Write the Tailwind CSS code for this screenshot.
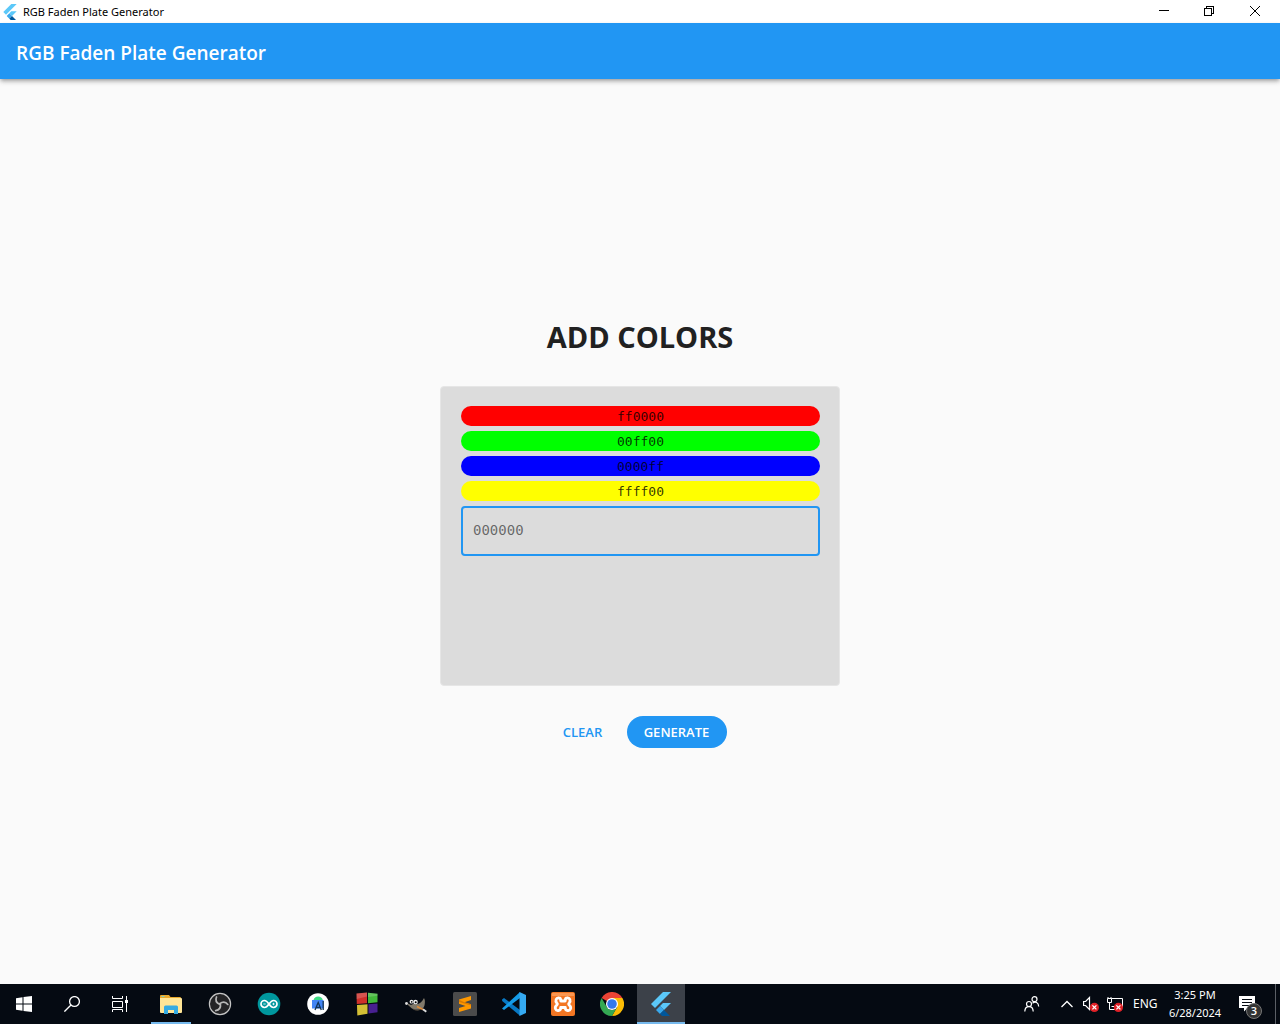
<!DOCTYPE html>
<html lang="en">
<head>
<meta charset="utf-8">
<meta name="viewport" content="width=device-width, initial-scale=1">
<title>RGB Faden Plate Generator</title>
<script src="https://cdn.jsdelivr.net/npm/@tailwindcss/browser@4"></script>
</head>
<body class="flex min-h-screen flex-col bg-[#fafafa] font-['Open_Sans','Noto_Sans',sans-serif] text-[#212121]">

<svg class="hidden" aria-hidden="true">
  <symbol id="flutter" viewBox="0 0 24 24">
    <path fill="#5bc8f9" d="M14 0h8L6 16l-4-4z"/>
    <path fill="#5bc8f9" d="M14 11h8l-7 7-4-4z"/>
    <path fill="#38a9ee" d="M7 18l4-4 4 4-4 4z"/>
    <path fill="#01579b" d="M11 22l4-4 6 6h-8z"/>
  </symbol>
</svg>

<div class="flex h-[23px] shrink-0 items-center bg-white pl-[2px] text-black">
  <svg class="size-4" aria-hidden="true"><use href="#flutter"/></svg>
  <span class="ml-[5px] flex-1 text-[11px] leading-4 font-['Noto_Sans',sans-serif]">RGB Faden Plate Generator</span>
  <button class="flex h-5 w-[46px] items-center justify-center" aria-label="Minimize">
    <svg class="size-[11px]" viewBox="0 0 11 11" shape-rendering="crispEdges"><path fill="currentColor" d="M1 4h10v1H1z"/></svg>
  </button>
  <button class="flex h-5 w-[46px] items-center justify-center" aria-label="Restore">
    <svg class="size-[11px]" viewBox="0 0 11 11" fill="none" stroke="currentColor" shape-rendering="crispEdges"><path d="M.5 2.500h7v7h-7zM2.500 2V.5h7v7H8"/></svg>
  </button>
  <button class="mr-[2px] flex h-5 w-[46px] items-center justify-center" aria-label="Close">
    <svg class="size-[11px]" viewBox="0 0 11 11" fill="none" stroke="currentColor"><path d="M0 0l10 10M10 0L0 10"/></svg>
  </button>
</div>

<header class="z-10 flex h-14 shrink-0 items-center bg-[#2196f3] px-4 pt-1 shadow-[0_2px_4px_-1px_rgba(0,0,0,0.3),0_3px_5px_rgba(0,0,0,0.16)]">
  <h1 class="text-[19px] leading-6 font-semibold text-white">RGB Faden Plate Generator</h1>
</header>

<main class="flex flex-1 flex-col items-center justify-center">
  <h2 class="pt-[2px] text-[29px] leading-[38px] font-bold">ADD COLORS</h2>
  <form class="flex flex-col items-center">
    <div class="my-[30px] h-[300px] w-[400px] rounded border border-[#e6e6e6] bg-[#dcdcdc] py-[19px] pr-[19px] pl-5 font-['DejaVu_Sans_Mono','Liberation_Mono',monospace]">
      <ul class="text-center text-[13px] leading-[22px] text-black/80">
        <li class="mb-[5px] h-5 rounded-full bg-[#ff0000]">ff0000</li>
        <li class="mb-[5px] h-5 rounded-full bg-[#00ff00]">00ff00</li>
        <li class="mb-[5px] h-5 rounded-full bg-[#0000ff]">0000ff</li>
        <li class="mb-[5px] h-5 rounded-full bg-[#ffff00]">ffff00</li>
      </ul>
      <input type="text" aria-label="Hex color" placeholder="000000" class="block h-[50px] w-full rounded border-2 border-[#2196f3] bg-transparent px-[10px] pb-[2px] text-sm outline-none placeholder:text-black/55">
    </div>
    <div class="flex gap-[15px] text-[13px] leading-5 font-semibold">
      <button type="reset" class="h-8 w-[58px] text-center text-[#2196f3]">CLEAR</button>
      <button type="button" class="h-8 w-[100px] rounded-full bg-[#2196f3] text-center text-white">GENERATE</button>
    </div>
  </form>
</main>

<footer class="flex h-10 shrink-0 items-stretch bg-[#050a12] text-white">
  <nav class="flex" aria-label="Taskbar">
    <button class="flex w-12 items-center justify-center" aria-label="Start">
      <svg class="size-4" viewBox="0 0 16 16" fill="#fff"><path d="M0 2.300L6.500 1.300v6.200H0zM7.500 1.100L16 0v7.500H7.500zM0 8.500h6.500v6.200L0 13.700zM7.500 8.500H16V16l-8.500-1.100z"/></svg>
    </button>
    <button class="flex w-12 items-center justify-center" aria-label="Search">
      <svg class="size-4" viewBox="0 0 16 16" fill="none" stroke="#fff" stroke-width="1.300"><circle cx="10.500" cy="5.500" r="4.900"/><path d="M7 9L.4 15.600"/></svg>
    </button>
    <button class="mr-[3px] flex w-12 items-center justify-center" aria-label="Task view">
      <svg class="size-4" viewBox="0 0 16 16" fill="none" stroke="#fff"><path d="M.5 0v2.500h10V0M.5 5.500h10v6H.5zM.5 16v-2.500h10V16M14.500 0v16"/><path fill="#fff" stroke="none" d="M13 4h3v3h-3z"/></svg>
    </button>
    <div class="flex gap-px">
      <button class="flex w-12 items-center justify-center" aria-label="File Explorer">
        <span class="flex h-10 w-10 items-center justify-center border-y-2 border-t-transparent border-b-[#76b9ed]">
          <svg class="h-[19px] w-[22px]" viewBox="0 0 22 19"><path fill="#e9a92c" d="M0 1q0-1 1-1h8l1.500 2H20q1 0 1 1v4H0z"/><path fill="#7ed0c0" d="M1.500 1h3v1h-3z"/><path fill="#ffe596" d="M0 3h21q1 0 1 1v13q0 1-1 1H1q-1 0-1-1z"/><path fill="#35abe2" d="M4 19v-7q0-1.500 1.500-1.500h11q1.500 0 1.500 1.500v7h-4v-4H8v4z"/></svg>
        </span>
      </button>
      <button class="flex w-12 items-center justify-center" aria-label="OBS Studio">
        <svg class="size-6" viewBox="0 0 24 24"><circle cx="12" cy="12" r="10.600" fill="#242426" stroke="#c4c4c4" stroke-width="1.200"/><g fill="none" stroke="#b8b8b8" stroke-width="1.700" stroke-linecap="round"><path d="M12 12.500C8.500 11 7 8.500 8.500 5"/><path d="M12 12.500C8.500 11 7 8.500 8.500 5" transform="rotate(120 12 12)"/><path d="M12 12.500C8.500 11 7 8.500 8.500 5" transform="rotate(240 12 12)"/></g></svg>
      </button>
      <button class="flex w-12 items-center justify-center" aria-label="Arduino">
        <svg class="size-6" viewBox="0 0 24 24"><circle cx="12" cy="12" r="11.300" fill="#00979d"/><path fill="none" stroke="#fff" stroke-width="1.700" d="M12 12C10 9.200 8.900 8.500 7.500 8.500a3.500 3.500 0 0 0 0 7c1.400 0 2.500-.7 4.500-3.500s3.100-3.500 4.500-3.500a3.500 3.500 0 0 1 0 7c-1.400 0-2.500-.7-4.500-3.500z"/><path fill="none" stroke="#fff" stroke-width=".8" d="M6.300 12h2.400m6.600 0h2.400m-1.200-1.200v2.400"/></svg>
      </button>
      <button class="flex w-12 items-center justify-center" aria-label="Android Studio">
        <svg class="size-6" viewBox="0 0 24 24"><circle cx="12" cy="12" r="10.800" fill="#fff"/><path fill="#3ddc84" d="M7.500 8a4.800 4.800 0 0 1 9.300 0z"/><path fill="#4285f4" d="M6 8h11.500v8.500H6z"/><path fill="none" stroke="#123456" stroke-width="1.300" d="M9 18l3.200-7.500L15.300 18M10 15.500h4.500M17.200 9v9"/></svg>
      </button>
      <button class="flex w-12 items-center justify-center" aria-label="Code::Blocks">
        <svg class="size-6" viewBox="0 0 24 24"><path fill="#cf302a" d="M1.500 1.500L12 .5v10.800L1.800 12z"/><path fill="#42b83a" d="M13 .8l9.500 1v8.500l-9.500.9z"/><path fill="#d4bf35" d="M2 13l10.500-.7v9.500L2.300 23.500z"/><path fill="#482090" d="M13.500 12.200l9-.7v8.800l-9 1.200z"/><path fill="#fff" fill-opacity=".18" d="M1.500 1.500L12 .5v4L1.600 7zM13 .8l9.500 1v2L13 5z"/></svg>
      </button>
      <button class="flex w-12 items-center justify-center" aria-label="GIMP">
        <svg class="size-6" viewBox="0 0 24 24"><path fill="#80796b" d="M3 11l4 2c2-1 4-2 7-1 2-1 4-2 6-6l.8 2c.4 4-.4 8-3 9-4 1.500-9 1-11-1.500L4 13z"/><path fill="#50483d" d="M8 16c3 2 7 2 9.500.5L15 18.500c-3 .5-6-.5-7-2.500z"/><circle cx="2.500" cy="11.500" r="1.400" fill="#ddd"/><circle cx="7.500" cy="9.700" r="1.900" fill="#eee"/><circle cx="11.500" cy="10" r="2.300" fill="#eee"/><circle cx="7.700" cy="9.900" r=".8"/><circle cx="11.700" cy="10.200" r="1"/><path stroke="#df8b38" stroke-width="1.600" d="M13 14.500l6 3"/><path stroke="#ddd" stroke-width="2" d="M19 17.200l3.300 2.500"/></svg>
      </button>
      <button class="flex w-12 items-center justify-center" aria-label="Sublime Text">
        <svg class="size-6" viewBox="0 0 24 24"><rect width="24" height="24" rx="1.500" fill="#4b4b4b"/><path fill="#ff9800" d="M6 7.500L18 4v4l-6.500 2.200L18 12.200v4.300L6 20v-4l6.500-2L6 11.800z"/><path fill="#dc7b00" d="M6 7.700l5.500 2.500 6.500 2v1.300L6 10z"/></svg>
      </button>
      <button class="flex w-12 items-center justify-center" aria-label="Visual Studio Code">
        <svg class="size-6" viewBox="0 0 24 24"><path fill="#0878c4" d="M0 7.500l2-1.500 16 12v5.800L.2 9z"/><path fill="#149be8" d="M0 16.500L18 0v6L2 18z"/><path fill="#35aaf2" d="M17.500 0L24 3v18l-6.500 3z"/></svg>
      </button>
      <button class="flex w-12 items-center justify-center" aria-label="XAMPP">
        <svg class="size-6" viewBox="0 0 24 24"><rect width="24" height="24" rx="2" fill="#f37623"/><path fill="#ffad72" fill-opacity=".6" d="M1 1h22v3H1z"/><path fill="none" stroke="#fff" stroke-width="2.800" stroke-linejoin="round" d="M8 6c-3-.5-4 3-2.200 5 .7.700.7 1.300 0 2C3 15.500 4.500 19 7.500 18.500c2 0 2.200-2 2.200-3h4.600c0 1 .2 3 2.200 3 3 .5 4.500-3 1.700-5.500-.7-.7-.7-1.300 0-2C20 9 19 5.500 16 6c-1.500 0-1.800 1.500-1.800 3H9.800C9.800 7.500 9.500 6 8 6z"/></svg>
      </button>
      <button class="flex w-12 items-center justify-center" aria-label="Chrome">
        <svg class="size-6" viewBox="0 0 24 24"><path fill="#ea4335" d="M12 12L1.600 6a12 12 0 0 1 20.800 0z"/><path fill="#fbbc05" d="M12 6h10.400A12 12 0 0 1 12 24l5.200-9z"/><path fill="#34a853" d="M12 24A12 12 0 0 1 1.600 6l5.200 9A6 6 0 0 0 17.200 15z"/><circle cx="12" cy="12" r="6" fill="#fff"/><circle cx="12" cy="12" r="4.800" fill="#3478ec"/></svg>
      </button>
      <button class="flex w-12 items-center justify-center border-y-2 border-t-[#3c4149] border-b-[#76b9ed] bg-[#3c4149]" aria-label="RGB Faden Plate Generator">
        <svg class="size-6" aria-hidden="true"><use href="#flutter"/></svg>
      </button>
    </div>
  </nav>

  <div class="ml-auto flex items-center">
    <button class="mr-[21px]" aria-label="People">
      <svg class="block size-4" viewBox="0 0 16 16" fill="none" stroke="#fff" stroke-width="1.200"><circle cx="5" cy="8" r="2.500"/><path d="M.8 15.500c.2-6.500 8.200-6.500 8.400 0"/><circle cx="10.500" cy="3.200" r="2.500"/><path d="M8.500 7.200c3-2.400 6-.5 6.200 3.300"/></svg>
    </button>
    <button class="mr-[9px]" aria-label="Show hidden icons">
      <svg class="block h-4 w-3" viewBox="0 0 12 16" fill="none" stroke="#fff" stroke-width="1.300"><path d="M.5 11L6 5.500 11.500 11"/></svg>
    </button>
    <button class="mr-2" aria-label="Volume muted">
      <svg class="block h-4 w-[17px]" viewBox="0 0 17 16"><path fill="none" stroke="#fff" stroke-width="1.200" d="M1.600 5.500h2L7.500 1.500v12l-3.900-4h-2z"/><circle cx="12.400" cy="11.400" r="4.600" fill="#e02127"/><path stroke="#fff" stroke-width="1.300" d="M10.400 9.400l4 4m0-4l-4 4"/></svg>
    </button>
    <button class="mr-[10px]" aria-label="Network disconnected">
      <svg class="block h-4 w-4" viewBox="0 0 16 16"><path fill="none" stroke="#fff" d="M4.500 2.500h11v8h-11M.5 2.500h4v4h-4zM2.500 6.500v7h6M1 1v1.500M4 1v1.500"/><circle cx="11.400" cy="11.400" r="4.600" fill="#e02127"/><path stroke="#fff" stroke-width="1.300" d="M9.400 9.400l4 4m0-4l-4 4"/></svg>
    </button>
    <button class="mr-[9px] w-6 text-center text-[12px] leading-4 font-['Noto_Sans',sans-serif]">ENG</button>
    <button class="w-[58px] text-center text-[11px] leading-[18px] font-['Noto_Sans',sans-serif]"><time datetime="2024-06-28T15:25">3:25 PM<br>6/28/2024</time></button>
    <button class="relative mr-3 ml-[15px] h-6 w-6" aria-label="Notifications, 3 new">
      <svg class="block size-6" viewBox="0 0 24 24"><path fill="#fff" d="M0 4h16v12H8.500L5 19.500V16H0z"/><path stroke="#050a12" d="M3 7.500h10M3 10.500h10M3 13.500h7"/></svg>
      <span class="absolute top-[11px] left-[7px] flex size-4 items-center justify-center rounded-full border border-[#777] bg-[#333] text-[11px] leading-3 font-semibold">3</span>
    </button>
    <button class="h-10 w-[5px] border-l border-[#5b5f66]" aria-label="Show desktop"></button>
  </div>
</footer>
</body>
</html>
